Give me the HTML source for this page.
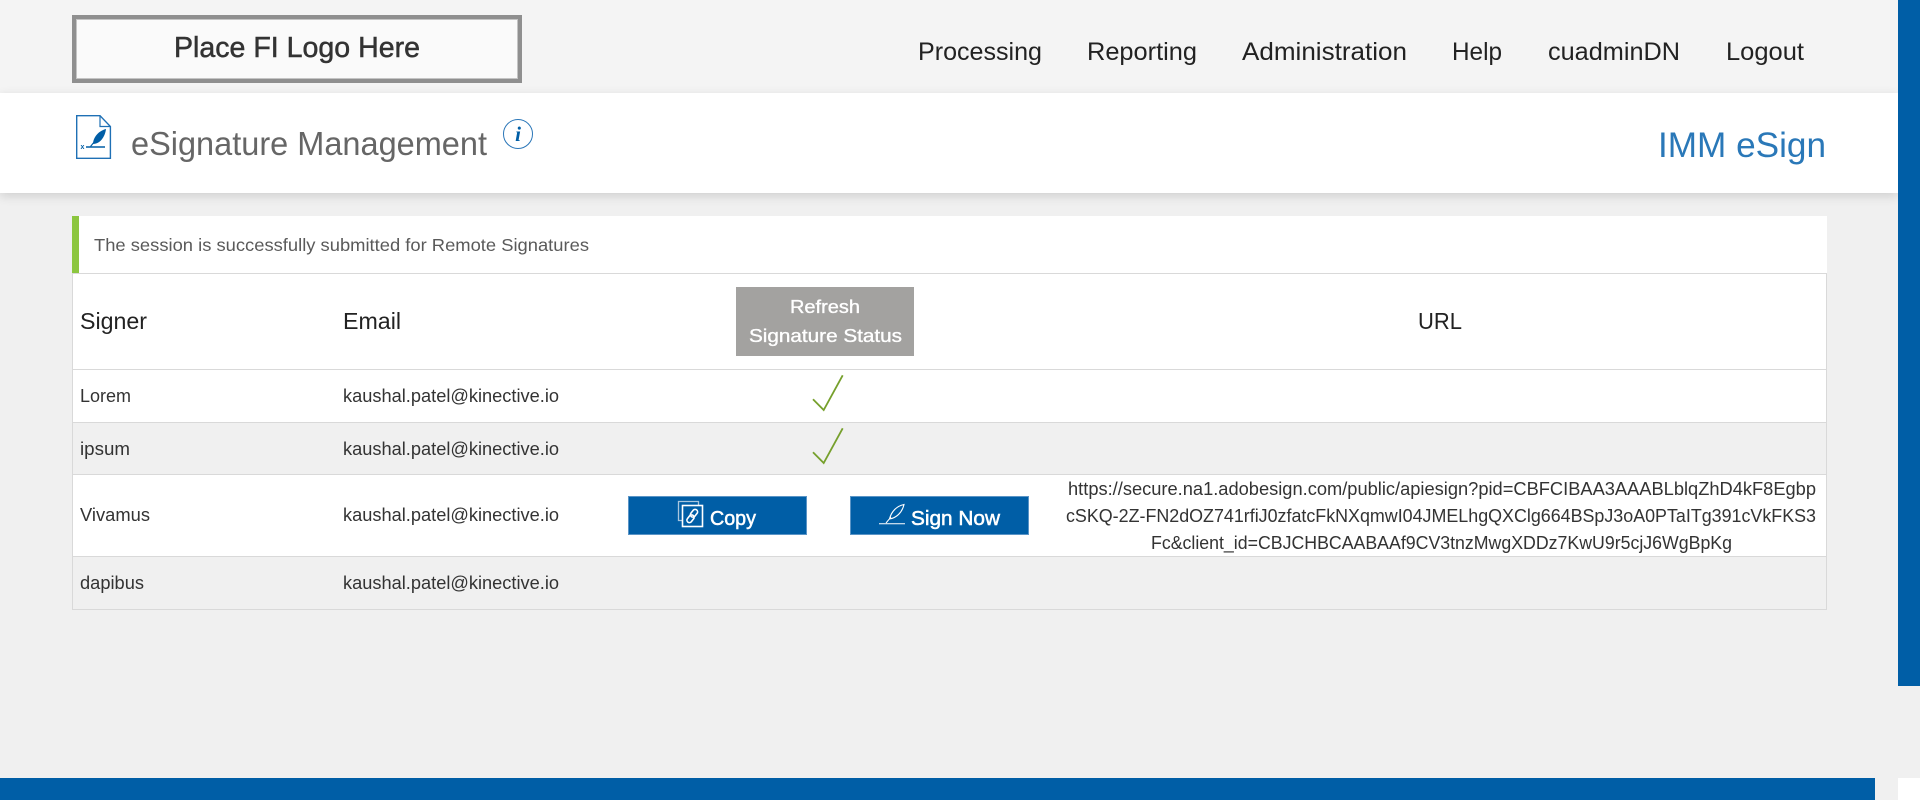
<!DOCTYPE html>
<html lang="en">
<head>
<meta charset="utf-8">
<title>eSignature Management</title>
<style>
html,body{margin:0;padding:0;width:1920px;height:800px;overflow:hidden;background:#f0f0f0;font-family:"Liberation Sans",sans-serif}
.b{position:absolute;box-sizing:border-box}
svg{position:absolute;left:0;top:0}
text{font-family:"Liberation Sans",sans-serif}
</style>
</head>
<body>
<div class="b" style="left:0;top:0;width:1898px;height:93px;background:#f4f4f4"></div>
<div class="b" style="left:0;top:93px;width:1898px;height:100px;background:#fff;box-shadow:0 3px 10px rgba(0,0,0,.14)"></div>
<div class="b" style="left:1898px;top:0;width:22px;height:686px;background:#005ea6"></div>
<div class="b" style="left:0;top:778px;width:1875px;height:22px;background:#005ea6"></div>
<div class="b" style="left:1898px;top:778px;width:22px;height:22px;background:#fff"></div>
<div class="b" style="left:72px;top:15px;width:450px;height:68px;background:#fafafa;border:4px solid #8f8f8f;outline:1px solid #c4c4c4;outline-offset:-5px"></div>

<div class="b" style="left:72px;top:216px;width:1755px;height:57px;background:#fff;border-left:7px solid #8cc63f"></div>

<div class="b" style="left:72px;top:273px;width:1755px;height:337px;background:#fff;border:1px solid #d9d9d9"></div>
<div class="b" style="left:73px;top:369px;width:1753px;height:1px;background:#d9d9d9"></div>
<div class="b" style="left:73px;top:422px;width:1753px;height:53px;background:#f0f0f0;border-top:1px solid #d9d9d9;border-bottom:1px solid #d9d9d9"></div>
<div class="b" style="left:73px;top:556px;width:1753px;height:53px;background:#f0f0f0;border-top:1px solid #d9d9d9"></div>

<div class="b" style="left:736px;top:287px;width:178px;height:69px;background:#a3a2a0"></div>
<div class="b" style="left:628px;top:496px;width:179px;height:39px;background:#005ea6;border:1px solid #5a94c6"></div>
<div class="b" style="left:850px;top:496px;width:179px;height:39px;background:#005ea6;border:1px solid #5a94c6"></div>

<svg width="1920" height="800" viewBox="0 0 1920 800" xmlns="http://www.w3.org/2000/svg">
  <text x="174" y="57" font-size="29" fill="#333" stroke="#333" stroke-width=".5" textLength="246" lengthAdjust="spacingAndGlyphs">Place FI Logo Here</text>

  <g font-size="25" fill="#222">
    <text x="918" y="60" textLength="124" lengthAdjust="spacingAndGlyphs">Processing</text>
    <text x="1087" y="60" textLength="110" lengthAdjust="spacingAndGlyphs">Reporting</text>
    <text x="1242" y="60" textLength="165" lengthAdjust="spacingAndGlyphs">Administration</text>
    <text x="1452" y="60" textLength="50" lengthAdjust="spacingAndGlyphs">Help</text>
    <text x="1548" y="60" textLength="132" lengthAdjust="spacingAndGlyphs">cuadminDN</text>
    <text x="1726" y="60" textLength="78" lengthAdjust="spacingAndGlyphs">Logout</text>
  </g>

  <text x="131" y="155" font-size="33" fill="#666" textLength="356" lengthAdjust="spacingAndGlyphs">eSignature Management</text>
  <text x="1658" y="157" font-size="35" fill="#2a78b8" textLength="168" lengthAdjust="spacingAndGlyphs">IMM eSign</text>

  <!-- document icon -->
  <path d="M76.700 115.700H100L110.400 126.500V158.300H76.700Z" fill="#fff" stroke="#1f70b5" stroke-width="1.400"/>
  <path d="M100 115.700V126.500H110.400" fill="none" stroke="#1f70b5" stroke-width="1.200"/>
  <path d="M106 129C98 131 93 138 93 144C100 144 105 137 106 129Z" fill="#005ea6"/>
  <path d="M95 141L90.500 146.500" stroke="#005ea6" stroke-width="1.200" fill="none"/>
  <path d="M86 147H105" stroke="#005ea6" stroke-width="1.600" fill="none"/>
  <text x="80.500" y="149" font-size="7" font-weight="bold" fill="#005ea6">x</text>

  <!-- info icon -->
  <circle cx="518" cy="134" r="14.500" fill="#fff" stroke="#2a76b8" stroke-width="1"/>
  <text x="518" y="141" font-size="21" font-weight="bold" font-style="italic" text-anchor="middle" fill="#005ea6" style="font-family:'Liberation Serif',serif">i</text>

  <text x="94" y="251" font-size="17.500" fill="#5a5a5a" textLength="495" lengthAdjust="spacingAndGlyphs">The session is successfully submitted for Remote Signatures</text>

  <g font-size="23" fill="#222">
    <text x="80" y="329" textLength="67" lengthAdjust="spacingAndGlyphs">Signer</text>
    <text x="343" y="329" textLength="58" lengthAdjust="spacingAndGlyphs">Email</text>
    <text x="1418" y="329" textLength="44" lengthAdjust="spacingAndGlyphs">URL</text>
  </g>

  <g font-size="18" fill="#333">
    <text x="80" y="402" textLength="51" lengthAdjust="spacingAndGlyphs">Lorem</text>
    <text x="343" y="402" textLength="216" lengthAdjust="spacingAndGlyphs">kaushal.patel@kinective.io</text>
    <text x="80" y="455" textLength="50" lengthAdjust="spacingAndGlyphs">ipsum</text>
    <text x="343" y="455" textLength="216" lengthAdjust="spacingAndGlyphs">kaushal.patel@kinective.io</text>
    <text x="80" y="521" textLength="70" lengthAdjust="spacingAndGlyphs">Vivamus</text>
    <text x="343" y="521" textLength="216" lengthAdjust="spacingAndGlyphs">kaushal.patel@kinective.io</text>
    <text x="80" y="589" textLength="64" lengthAdjust="spacingAndGlyphs">dapibus</text>
    <text x="343" y="589" textLength="216" lengthAdjust="spacingAndGlyphs">kaushal.patel@kinective.io</text>
    <text x="1068" y="495" textLength="748" lengthAdjust="spacingAndGlyphs">https://secure.na1.adobesign.com/public/apiesign?pid=CBFCIBAA3AAABLblqZhD4kF8Egbp</text>
    <text x="1066" y="522" textLength="750" lengthAdjust="spacingAndGlyphs">cSKQ-2Z-FN2dOZ741rfiJ0zfatcFkNXqmwI04JMELhgQXClg664BSpJ3oA0PTaITg391cVkFKS3</text>
    <text x="1151" y="549" textLength="581" lengthAdjust="spacingAndGlyphs">Fc&amp;client_id=CBJCHBCAABAAf9CV3tnzMwgXDDz7KwU9r5cjJ6WgBpKg</text>
  </g>

  <g font-size="18.500" fill="#fff" stroke="#fff" stroke-width=".35">
    <text x="790" y="313" textLength="70" lengthAdjust="spacingAndGlyphs">Refresh</text>
    <text x="749" y="342" textLength="153" lengthAdjust="spacingAndGlyphs">Signature Status</text>
  </g>

  <path d="M813 399.300L823.700 410L842.700 375.300" fill="none" stroke="#76a02c" stroke-width="1.800"/>
  <path d="M813 452.300L823.700 463L842.700 428.300" fill="none" stroke="#76a02c" stroke-width="1.800"/>

  <!-- copy icon -->
  <path d="M682 520.500H678.500V501.500H698.500V505" fill="none" stroke="#a9c6de" stroke-width="1.300"/>
  <rect x="682.500" y="505.500" width="20" height="21" fill="none" stroke="#fff" stroke-width="1.600"/>
  <rect x="691.500" y="509" width="5" height="8.500" rx="2.500" transform="rotate(38 694 513.250)" fill="none" stroke="#fff" stroke-width="1.600"/>
  <rect x="688" y="514.500" width="5" height="8.500" rx="2.500" transform="rotate(38 690.500 518.750)" fill="none" stroke="#fff" stroke-width="1.600"/>
  <text x="710" y="525" font-size="20" fill="#fff" stroke="#fff" stroke-width=".5" textLength="46" lengthAdjust="spacingAndGlyphs">Copy</text>

  <!-- sign icon -->
  <path d="M904 504.500C897 506 891.500 511 889.500 519C896 518 902 513 904 504.500Z" fill="none" stroke="#fff" stroke-width="1.100"/>
  <path d="M891 517L886 523" stroke="#fff" stroke-width="1" fill="none"/>
  <path d="M879 523.700H905" stroke="#fff" stroke-width="1" fill="none"/>
  <text x="911" y="525" font-size="20" fill="#fff" stroke="#fff" stroke-width=".5" textLength="89" lengthAdjust="spacingAndGlyphs">Sign Now</text>
</svg>
</body>
</html>
